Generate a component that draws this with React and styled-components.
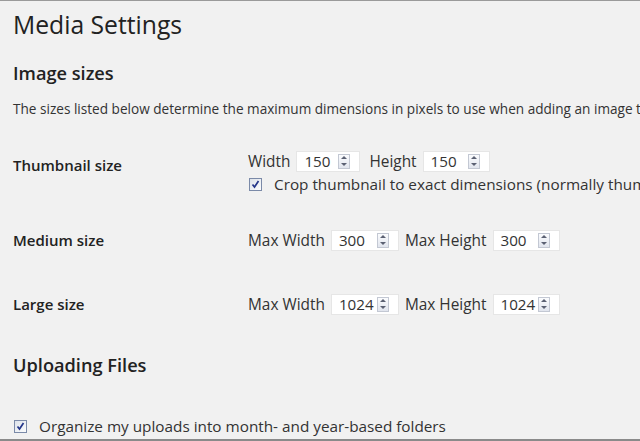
import React from "react"
import styled, { createGlobalStyle } from "styled-components"

const GlobalStyle = createGlobalStyle`
  html, body {
    margin: 0;
    padding: 0;
    background: #f1f1f1;
  }
  body {
    font-family: "Open Sans", "Liberation Sans", sans-serif;
    color: #222;
  }
`

const Page = styled.div`
  width: 640px;
  height: 441px;
  box-sizing: border-box;
  border-top: 1px solid #9a9a9a;
  border-bottom: 2px solid #8a8a8a;
  padding: 0 0 0 13px;
  overflow: hidden;
  white-space: nowrap;
  background: #f1f1f1;
`
const Title = styled.h1`
  font-size: 24.7px;
  font-weight: 400;
  line-height: 30px;
  margin: 9px 0 0 0;
  color: #222;
`
const SectionTitle = styled.h2`
  font-size: 18.2px;
  font-weight: 600;
  line-height: 22px;
  margin: ${(p) => p.$top}px 0 0 0;
  color: #222;
`
const Description = styled.p`
  font-size: 13.6px;
  line-height: 18px;
  margin: 16px 0 0 0;
  color: #333;
`
const Row = styled.div`
  display: flex;
  align-items: flex-start;
  margin-top: ${(p) => p.$top}px;
`
const RowLabel = styled.div`
  width: 235px;
  flex: none;
  font-size: 15px;
  font-weight: 600;
  line-height: 20px;
  padding-top: ${(p) => p.$pad || 0}px;
  color: #222;
`
const Fields = styled.div`
  display: flex;
  flex-direction: column;
  gap: 2px;
`
const FieldLine = styled.div`
  display: flex;
  align-items: center;
  height: 22px;
  font-size: 15.4px;
  color: #333;
`
const FieldLabel = styled.span`
  margin-right: 6px;
  margin-left: ${(p) => p.$gap || 0}px;
`
const NumberBox = styled.span`
  display: inline-flex;
  align-items: center;
  box-sizing: border-box;
  width: ${(p) => p.$w || 65}px;
  height: 21px;
  background: #fff;
  border: 1px solid #e6e6e6;
  padding: 0 9px 0 7px;
  font-size: 15.2px;
  color: #333;
`
const NumberValue = styled.span`
  flex: 1;
`
const Spinner = styled.span`
  display: inline-flex;
  flex: none;
  flex-direction: column;
  width: 12px;
  height: 15px;
  box-sizing: border-box;
  border: 1px solid #c3c8d3;
  background: linear-gradient(#fbfcfe, #e1e5ee);
  justify-content: space-around;
  align-items: center;
`
const Arrow = styled.span`
  width: 0;
  height: 0;
  border-left: 3px solid transparent;
  border-right: 3px solid transparent;
  ${(p) =>
    p.$up
      ? "border-bottom: 3px solid #5b6173;"
      : "border-top: 3px solid #5b6173;"}
`
const CheckLine = styled.label`
  display: flex;
  align-items: center;
  font-size: 15.3px;
  color: #333;
  height: 20px;
`
const Box = styled.span`
  display: inline-flex;
  align-items: center;
  justify-content: center;
  flex: none;
  width: 13px;
  height: 13px;
  box-sizing: border-box;
  border: 1px solid #7b8aa8;
  background: linear-gradient(135deg, #dde2ea, #fbfcfd);
  margin: 0 12px 0 1px;
`

const Check = () => (
  <Box>
    <svg width="9" height="9" viewBox="0 0 9 9">
      <path d="M1.5 4.5 L3.5 7 L7.5 1" fill="none" stroke="#24368a" strokeWidth="1.7" />
    </svg>
  </Box>
)

const NumberInput = ({ value, w }) => (
  <NumberBox $w={w}>
    <NumberValue>{value}</NumberValue>
    <Spinner>
      <Arrow $up />
      <Arrow />
    </Spinner>
  </NumberBox>
)

const App = () => (
  <Page>
    <GlobalStyle />
    <Title>Media Settings</Title>
    <SectionTitle $top={22}>Image sizes</SectionTitle>
    <Description>
      The sizes listed below determine the maximum dimensions in pixels to use when adding an image to the Media Library.
    </Description>

    <Row $top={32}>
      <RowLabel $pad={5}>Thumbnail size</RowLabel>
      <Fields>
        <FieldLine>
          <FieldLabel>Width</FieldLabel>
          <NumberInput value="150" w={64} />
          <FieldLabel $gap={9}>Height</FieldLabel>
          <NumberInput value="150" w={67} />
        </FieldLine>
        <CheckLine>
          <Check />
          Crop thumbnail to exact dimensions (normally thumbnails are proportional)
        </CheckLine>
      </Fields>
    </Row>

    <Row $top={35}>
      <RowLabel $pad={1}>Medium size</RowLabel>
      <FieldLine>
        <FieldLabel>Max Width</FieldLabel>
        <NumberInput value="300" w={68} />
        <FieldLabel $gap={6}>Max Height</FieldLabel>
        <NumberInput value="300" w={67} />
      </FieldLine>
    </Row>

    <Row $top={42}>
      <RowLabel $pad={1}>Large size</RowLabel>
      <FieldLine>
        <FieldLabel>Max Width</FieldLabel>
        <NumberInput value="1024" w={68} />
        <FieldLabel $gap={6}>Max Height</FieldLabel>
        <NumberInput value="1024" w={67} />
      </FieldLine>
    </Row>

    <SectionTitle $top={39}>Uploading Files</SectionTitle>
    <Row $top={40}>
      <CheckLine>
        <Check />
        Organize my uploads into month- and year-based folders
      </CheckLine>
    </Row>
  </Page>
)

export default App
